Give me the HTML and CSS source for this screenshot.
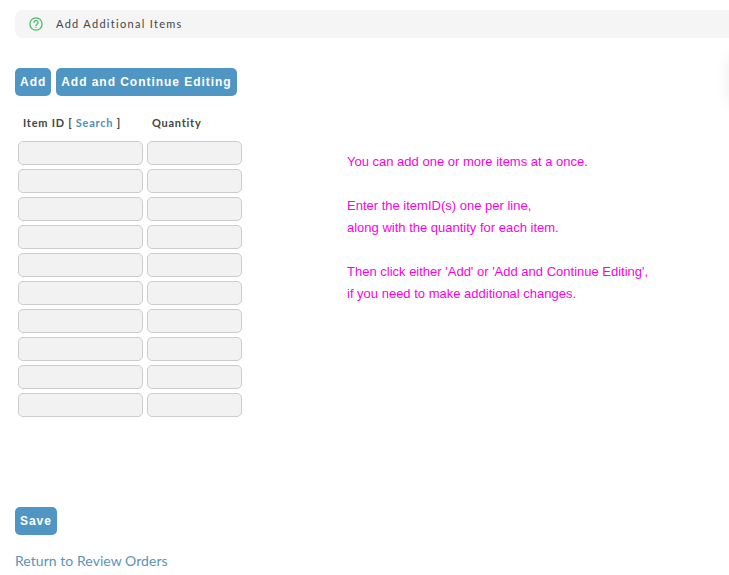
FILE: index.html
```html
<!DOCTYPE html>
<html lang="en">
<head>
    <meta charset="UTF-8">
    <title>Add Additional Items</title>
    <link rel="stylesheet" href="styles.css">
</head>
<body>
    <div class="page">
        <div class="panel-heading">
            <svg class="help-icon" viewBox="0 0 24 24" width="14" height="14" fill="none" stroke="#4cb964" stroke-width="2.2">
                <circle cx="12" cy="12" r="10.5"></circle>
                <path d="M8.6 9.4a3.4 3.4 0 1 1 5.2 2.9c-1.2.8-1.8 1.4-1.8 2.7" stroke-linecap="round"></path>
                <path d="M12 17.4v1.6"></path>
            </svg>
            <span class="panel-title">Add Additional Items</span>
        </div>

        <div class="actions">
            <button class="btn">Add</button>
            <button class="btn">Add and Continue Editing</button>
        </div>

        <div class="form-body">
            <div class="item-grid">
                <div class="col-label">Item ID [ <a href="#">Search</a> ]</div>
                <div class="col-label">Quantity</div>
                <input class="field"><input class="field">
                <input class="field"><input class="field">
                <input class="field"><input class="field">
                <input class="field"><input class="field">
                <input class="field"><input class="field">
                <input class="field"><input class="field">
                <input class="field"><input class="field">
                <input class="field"><input class="field">
                <input class="field"><input class="field">
                <input class="field"><input class="field">
            </div>
            <div class="help-text">
                <p>You can add one or more items at a once.</p>
                <p>Enter the itemID(s) one per line,<br>along with the quantity for each item.</p>
                <p>Then click either 'Add' or 'Add and Continue Editing',<br>if you need to make additional changes.</p>
            </div>
        </div>

        <div class="save-row">
            <button class="btn">Save</button>
        </div>
        <a class="return-link" href="#">Return to Review Orders</a>
    </div>
    <div class="edge-shadow"></div>
</body>
</html>
```

FILE: styles.css
```css
html, body {
    margin: 0;
    padding: 0;
    background-color: #ffffff;
    overflow: hidden;
}

body {
    font-family: Lato, sans-serif;
    height: 575px;
}

.page {
    padding: 10px 0 0 15px;
}

.panel-heading {
    display: flex;
    align-items: center;
    height: 28px;
    padding-left: 14px;
    background-color: #f5f5f5;
    border-radius: 8px 0 0 8px;
}

.help-icon {
    flex-shrink: 0;
}

.panel-title {
    margin-left: 13px;
    margin-top: -2px;
    font-size: 11px;
    letter-spacing: 1.3px;
    color: #444444;
}

.actions {
    display: flex;
    gap: 5px;
    margin-top: 30px;
}

.btn {
    height: 28px;
    padding: 0 5px;
    border: none;
    border-radius: 5px;
    background-color: #4f96c4;
    color: #ffffff;
    font-family: "Liberation Sans", Arial, sans-serif;
    font-size: 12px;
    font-weight: bold;
    letter-spacing: 0.96px;
}

.form-body {
    display: flex;
}

.item-grid {
    display: grid;
    grid-template-columns: 125px 95px;
    grid-template-rows: 41px repeat(10, 24px);
    gap: 4px;
    width: 220px;
    margin-left: 3px;
}

.col-label {
    padding: 20px 0 0 5px;
    font-size: 11px;
    font-weight: bold;
    letter-spacing: 0.75px;
    color: #444444;
}

.col-label a {
    color: #4f8fba;
    text-decoration: none;
}

.field {
    box-sizing: border-box;
    width: 100%;
    height: 24px;
    margin: 0;
    padding: 0 6px;
    background-color: #f2f2f2;
    border: 1px solid #cccccc;
    border-radius: 5px;
}

.help-text {
    margin: 55px 0 0 109px;
    font-family: "Liberation Sans", Arial, sans-serif;
    font-size: 13px;
    line-height: 22px;
    color: #ff00dd;
}

.help-text p {
    margin: 0 0 22px;
}

.save-row {
    margin-top: 90px;
}

.return-link {
    display: inline-block;
    margin-top: 17px;
    font-size: 14px;
    letter-spacing: 0.05px;
    color: #5b93bb;
    text-decoration: none;
}

.edge-shadow {
    position: absolute;
    top: 55px;
    left: 729px;
    width: 10px;
    height: 50px;
    box-shadow: 0 0 14px rgba(0, 0, 0, 0.08);
}
```
